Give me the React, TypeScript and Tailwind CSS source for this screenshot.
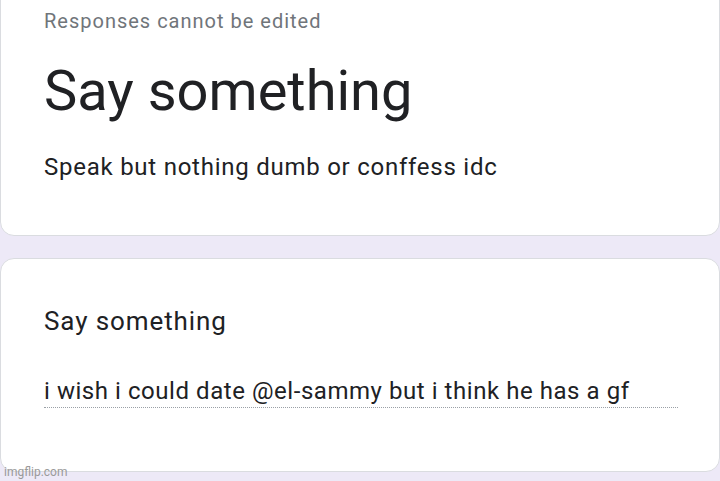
const FONT = { fontFamily: "Roboto, 'Noto Sans', sans-serif" };

export default function App() {
  return (
    <div
      className="relative w-[720px] h-[481px] overflow-hidden bg-[#ede9f7]"
      style={FONT}
    >
      <div className="flex flex-col gap-[22px] mt-[-20px]">
        <div className="h-[256px] bg-white border border-[#dadce0] rounded-[14px] px-[43px] pt-[27px]">
          <div className="text-[20px] leading-[26px] text-[#70757a] tracking-[1px]">
            Responses cannot be edited
          </div>
          <div className="mt-[25px] text-[56px] leading-[64px] text-[#202124]">
            Say something
          </div>
          <div className="mt-[29px] text-[24px] leading-[30px] tracking-[0.75px] text-[#202124]">
            Speak but nothing dumb or conffess idc
          </div>
        </div>
        <div className="h-[214px] bg-white border border-[#dadce0] rounded-[14px] px-[43px] pt-[47px]">
          <div className="text-[26px] leading-[30px] tracking-[0.9px] text-[#202124]">
            Say something
          </div>
          <div className="mt-[40px] w-[634px] border-b border-dotted border-[#9aa0a6] pb-[1px] text-[24px] leading-[30px] tracking-[0.55px] text-[#202124]">
            i wish i could date @el-sammy but i think he has a gf
          </div>
        </div>
      </div>
      <div className="absolute left-[4px] top-[465px] text-[12px] leading-[14px] text-[#9a9a9a]">
        imgflip.com
      </div>
    </div>
  );
}
